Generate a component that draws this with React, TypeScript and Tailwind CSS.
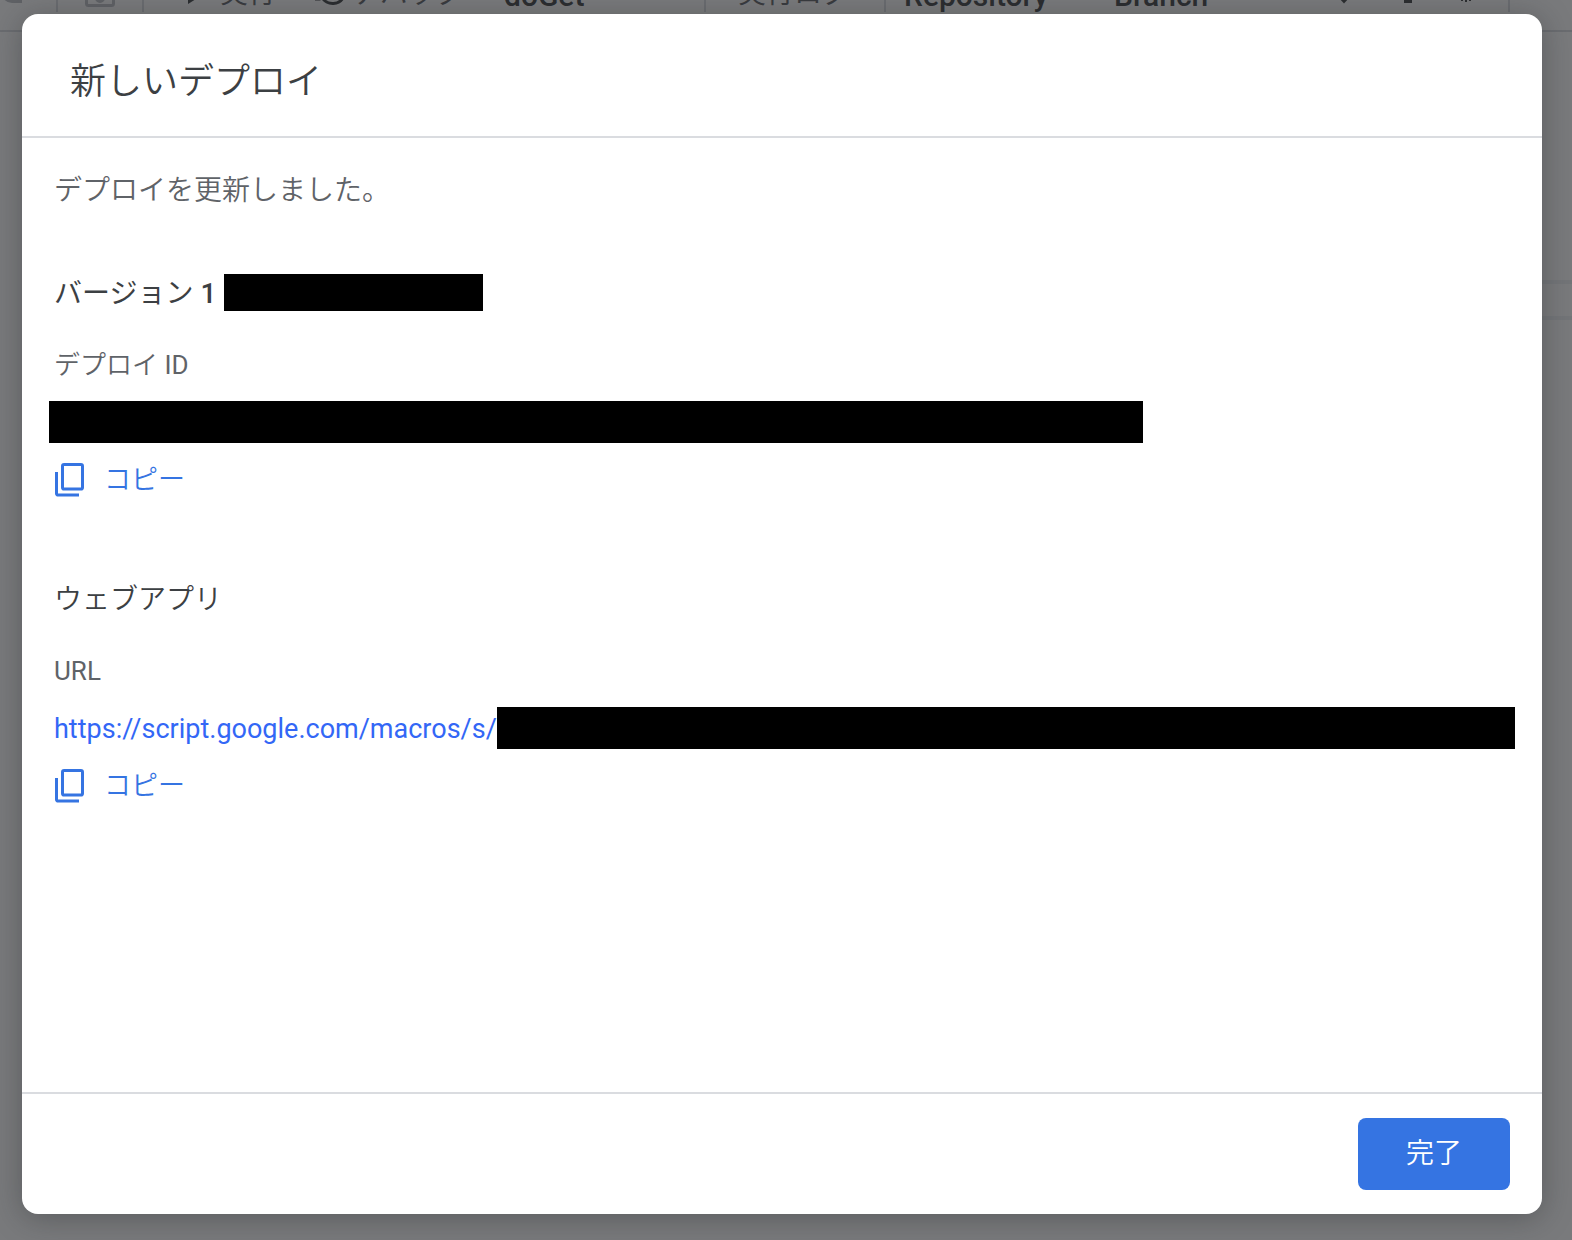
import React from "react";

function CopyIcon() {
  return (
    <svg width="30" height="34" viewBox="-1 0 30 34" fill="none" stroke="currentColor" strokeWidth="3" aria-hidden="true">
      <rect x="7.5" y="1.5" width="20" height="24.5" rx="1.6" />
      <path d="M1.5 9v21.5a1.6 1.6 0 0 0 1.6 1.6H24" />
    </svg>
  );
}

function CopyButton() {
  return (
    <button type="button" className="mt-[17px] flex h-10 items-center gap-5 text-[27px] text-[#3574e2]">
      <CopyIcon />
      <span className="font-[350]">コピー</span>
    </button>
  );
}

function Divider() {
  return <div className="h-9 w-0.5 shrink-0 bg-[#dadce0]" />;
}

function EditorToolbar() {
  return (
    <div className="-mt-[42px] flex h-[74px] items-center overflow-hidden border-b-2 border-[#dadce0] text-[28px] whitespace-nowrap text-[#5f6368]">
      <div className="w-14 shrink-0">
        <svg width="24" height="24" viewBox="0 0 24 24" fill="none" stroke="#bdc1c6" strokeWidth="3">
          <path d="M22 19.5H12a9 9 0 0 1-9-9" />
        </svg>
      </div>
      <Divider />
      <div className="flex w-[84px] shrink-0 justify-center">
        <svg width="30" height="26" viewBox="0 0 30 26" fill="none" stroke="#bdc1c6" strokeWidth="3">
          <rect x="1.5" y="-3" width="27" height="27.500" rx="2" />
          <circle cx="15" cy="17" r="3.500" />
        </svg>
      </div>
      <Divider />
      <div className="flex w-[170px] shrink-0 items-center gap-4 pl-[44px]">
        <svg width="16" height="20" viewBox="0 0 16 20" fill="#3c4043">
          <path d="M0 0l16 10L0 20z" />
        </svg>
        <span>実行</span>
      </div>
      <div className="flex w-[190px] shrink-0 items-center gap-1">
        <svg width="34" height="26" viewBox="0 0 34 26" fill="none" stroke="#3c4043" strokeWidth="3">
          <path d="M8 16c4 9 19 9 22-2M1 18h4v-7" />
        </svg>
        <span>デバッグ</span>
      </div>
      <div className="w-[200px] shrink-0 pt-0.5 text-[30px] font-medium text-[#3c4043]">doGet</div>
      <Divider />
      <div className="w-[178px] shrink-0 pl-[32px]">実行ログ</div>
      <Divider />
      <div className="w-[228px] shrink-0 pt-0.5 pl-[18px] text-[30px] font-medium text-[#3c4043]">Repository</div>
      <div className="w-[224px] shrink-0 pt-0.5 text-[30px] font-medium text-[#3c4043]">Branch</div>
      <div className="flex w-[170px] shrink-0 items-center">
        <svg width="140" height="20" viewBox="0 0 140 20" fill="#3c4043">
          <path d="M0 13h12l-6 6.500z" />
          <rect x="66" y="4" width="8" height="15" />
          <path d="M123 4h2v13h-2zM127 4h2v14h-2zM131 4h2v13h-2z" />
        </svg>
      </div>
      <Divider />
    </div>
  );
}

function Backdrop() {
  return (
    <div aria-hidden="true" className="absolute inset-0 overflow-hidden bg-white">
      <EditorToolbar />
      <div className="mt-[248px] ml-auto h-10 w-16 border-y-4 border-[#f1f3f4]" />
      <div className="absolute inset-0 bg-[#202124]/60" />
    </div>
  );
}

export default function App() {
  return (
    <main className="relative flex min-h-screen flex-col pt-3.5 pr-[30px] pb-[26px] pl-[22px] font-[Roboto,'Noto_Sans_CJK_JP',sans-serif]">
      <Backdrop />
      <section
        role="dialog"
        aria-labelledby="dialog-title"
        className="relative flex flex-1 flex-col rounded-2xl bg-white text-[28px] leading-10 text-[#3c4043] shadow-[0_4px_30px_rgba(32,33,36,0.35)]"
      >
        <header className="border-b-2 border-[#dadce0] px-12 pt-[43px] pb-[29px]">
          <h1 id="dialog-title" className="text-4xl leading-[50px] font-[350]">
            新しいデプロイ
          </h1>
        </header>

        <div className="flex-1 px-8 pt-[33px]">
          <p className="font-[350] text-[#5f6368]">デプロイを更新しました。</p>

          <div className="mt-[63px] flex items-start gap-2">
            <h2>
              バージョン <span className="font-medium">1</span>
            </h2>
            <span className="h-[37px] w-[259px] bg-black" />
          </div>
          <h3 className="mt-[31px] text-[26px] text-[#5f6368]">
            <span className="font-[350]">デプロイ</span> ID
          </h3>
          <div className="mt-4 -ml-[5px] h-[42px] w-[1094px] max-w-full bg-black" />
          <CopyButton />

          <h2 className="mt-20 font-[350]">ウェブアプリ</h2>
          <h3 className="mt-[31px] text-[26px] text-[#5f6368]">URL</h3>
          <div className="mt-4 -mr-[5px] flex h-[42px] items-center">
            <a href="https://script.google.com/macros/s/" className="pt-0.5 text-[27px] text-[#3367f6]">
              https://script.google.com/macros/s/
            </a>
            <span className="h-full flex-1 bg-black" />
          </div>
          <CopyButton />
        </div>

        <footer className="flex justify-end border-t-2 border-[#dadce0] px-8 py-6">
          <button type="button" className="h-[72px] w-[152px] rounded-lg bg-[#3574e2] font-[350] text-white">
            完了
          </button>
        </footer>
      </section>
    </main>
  );
}
